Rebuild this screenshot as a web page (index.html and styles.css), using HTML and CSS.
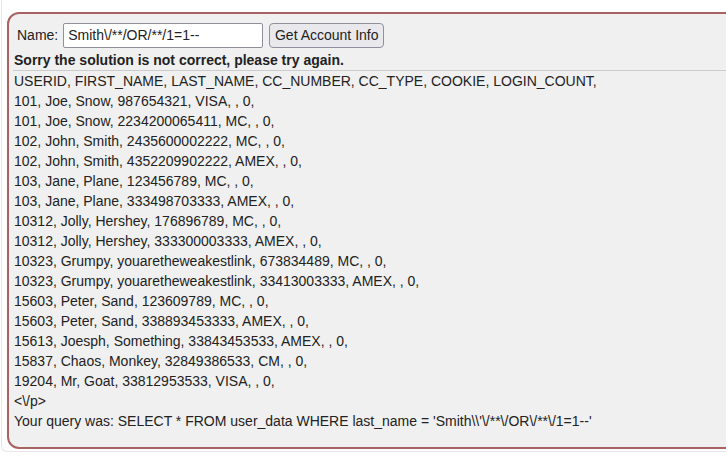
FILE: index.html
```html
<!DOCTYPE html>
<html>
<head>
<meta charset="utf-8">
<link rel="stylesheet" href="styles.css">
</head>
<body>
<div class="outer">
  <div class="box">
    <form class="form-row">
      <label class="label">Name:</label>
      <input class="field" type="text" value="Smith\/**/OR/**/1=1--">
      <button class="btn" type="button">Get Account Info</button>
    </form>
    <div class="feedback">Sorry the solution is not correct, please try again.</div>
    <div class="results">
      <div class="line">USERID, FIRST_NAME, LAST_NAME, CC_NUMBER, CC_TYPE, COOKIE, LOGIN_COUNT, </div>
      <div class="line">101, Joe, Snow, 987654321, VISA, , 0, </div>
      <div class="line">101, Joe, Snow, 2234200065411, MC, , 0, </div>
      <div class="line">102, John, Smith, 2435600002222, MC, , 0, </div>
      <div class="line">102, John, Smith, 4352209902222, AMEX, , 0, </div>
      <div class="line">103, Jane, Plane, 123456789, MC, , 0, </div>
      <div class="line">103, Jane, Plane, 333498703333, AMEX, , 0, </div>
      <div class="line">10312, Jolly, Hershey, 176896789, MC, , 0, </div>
      <div class="line">10312, Jolly, Hershey, 333300003333, AMEX, , 0, </div>
      <div class="line">10323, Grumpy, youaretheweakestlink, 673834489, MC, , 0, </div>
      <div class="line">10323, Grumpy, youaretheweakestlink, 33413003333, AMEX, , 0, </div>
      <div class="line">15603, Peter, Sand, 123609789, MC, , 0, </div>
      <div class="line">15603, Peter, Sand, 338893453333, AMEX, , 0, </div>
      <div class="line">15613, Joesph, Something, 33843453533, AMEX, , 0, </div>
      <div class="line">15837, Chaos, Monkey, 32849386533, CM, , 0, </div>
      <div class="line">19204, Mr, Goat, 33812953533, VISA, , 0, </div>
      <div class="line">&lt;\/p&gt;</div>
      <div class="line">Your query was: SELECT * FROM user_data WHERE last_name = 'Smith\\'\/**\/OR\/**\/1=1--'</div>
    </div>
  </div>
</div>
</body>
</html>
```

FILE: styles.css
```css
html, body {
  margin: 0;
  padding: 0;
  background: #ffffff;
  overflow: hidden;
}
body {
  width: 726px;
  height: 456px;
  font-family: "Liberation Sans", Arial, sans-serif;
  font-size: 14px;
  color: #222222;
}
.outer {
  margin-left: 1px;
  width: 800px;
  height: 452px;
  border-left: 1px solid #e6e6e6;
  border-bottom: 1px solid #e6e6e6;
  border-bottom-left-radius: 6px;
  box-sizing: border-box;
  padding-top: 12px;
  padding-left: 5px;
}
.box {
  width: 760px;
  box-sizing: border-box;
  border: 2px solid #a86262;
  border-radius: 12px;
  background: #f0f0f0;
  padding: 8px 0 16px 5px;
}
.form-row {
  display: flex;
  align-items: center;
  margin: 0;
  padding-left: 3px;
  height: 26px;
}
.label {
  margin-right: 5px;
}
.field {
  box-sizing: border-box;
  width: 200px;
  height: 25px;
  border: 1px solid #8f8f9d;
  border-radius: 2px;
  background: #ffffff;
  font-family: "Liberation Sans", Arial, sans-serif;
  font-size: 14px;
  color: #222222;
  padding: 0 4px;
  margin: 0 6px 0 0;
}
.btn {
  box-sizing: border-box;
  height: 25px;
  width: 115px;
  border: 1px solid #8f8f9d;
  border-radius: 4px;
  background: #e9e9ed;
  font-family: "Liberation Sans", Arial, sans-serif;
  font-size: 14px;
  color: #222222;
  padding: 0;
  margin: 0;
}
.feedback {
  font-weight: bold;
  line-height: 20px;
  margin-top: 2px;
}
.results {
  border-top: 1px solid #cccccc;
  margin-left: -1px;
  padding-left: 1px;
}
.line {
  line-height: 20px;
  white-space: pre;
}
```
